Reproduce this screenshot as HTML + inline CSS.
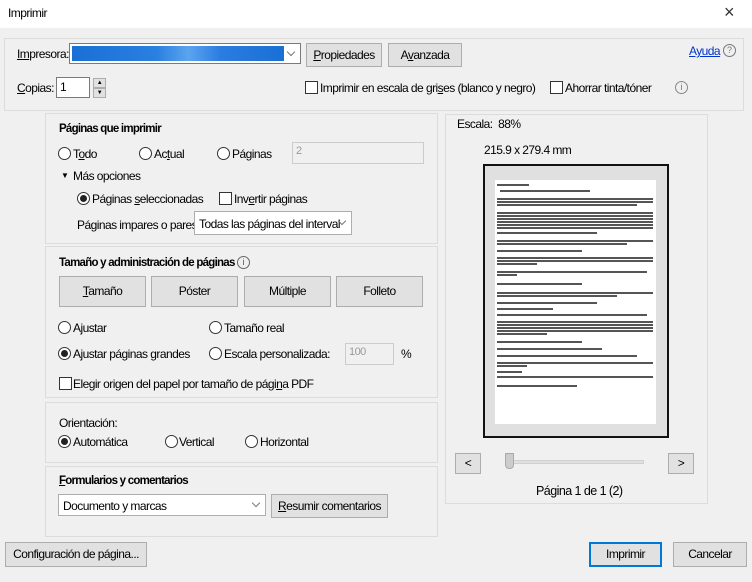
<!DOCTYPE html>
<html><head><meta charset="utf-8"><style>
*{box-sizing:border-box;margin:0;padding:0}
body{width:752px;height:582px;background:#f0f0f0;font-family:"Liberation Sans",sans-serif;font-size:12px;letter-spacing:-0.55px;color:#000;position:relative;overflow:hidden}
div,span{white-space:nowrap}
.a{position:absolute}
.box{position:absolute;border:1px solid #dcdcdc;background:#f0f0f0}
.btn{position:absolute;background:#e1e1e1;border:1px solid #adadad;text-align:center}
.rad{position:absolute;width:13px;height:13px;border:1px solid #333;border-radius:50%;background:#fff}
.rad.on::after{content:"";position:absolute;left:2px;top:2px;width:7px;height:7px;border-radius:50%;background:#222}
.chk{position:absolute;width:13px;height:13px;border:1px solid #333;background:#fff}
.inp{position:absolute;background:#fff;border:1px solid #7a7a7a}
.dis{position:absolute;background:#f0f0f0;border:1px solid #ccc;color:#999;font-size:11px;padding:2px 3px}
.sel{position:absolute;background:#fff;border:1px solid #adadad;overflow:hidden}
.arr{position:absolute;right:6px;top:50%;margin-top:-5px;width:6px;height:6px;border-right:1px solid #777;border-bottom:1px solid #777;transform:rotate(45deg)}
.b{font-weight:bold;font-size:11.5px;letter-spacing:-0.75px}
.l{position:absolute;height:1.5px;background:#555}
u{text-decoration:underline}
</style></head><body>
<div class="a" style="left:0;top:0;width:752px;height:28px;background:#fff"></div>
<div class="a" style="left:8px;top:6px;font-size:12px">Imprimir</div>
<div class="a" style="left:724px;top:2px;font-size:18px;color:#333">×</div>

<div class="box" style="left:4px;top:38px;width:740px;height:73px"></div>
<div class="a" style="left:17px;top:47px"><u>Im</u>presora:</div>
<div class="sel" style="left:69px;top:43px;width:232px;height:21px;border-color:#7a7a7a"><div style="position:absolute;left:2px;top:2px;width:212px;height:15px;background:linear-gradient(90deg,#1a6fd6,#2a80e0 40%,#5ba4ef 55%,#2a7de0 70%,#1a6fd6)"></div><div class="arr"></div></div>
<div class="btn" style="left:306px;top:43px;width:76px;height:24px;line-height:22px"><u>P</u>ropiedades</div>
<div class="btn" style="left:388px;top:43px;width:74px;height:24px;line-height:22px">A<u>v</u>anzada</div>
<div class="a" style="left:689px;top:44px;color:#0033cc;text-decoration:underline">Ayuda</div>
<div class="a" style="left:723px;top:44px;width:13px;height:13px;border:1px solid #777;border-radius:50%;font-size:9px;text-align:center;line-height:11px;color:#777;letter-spacing:0">?</div>
<div class="a" style="left:17px;top:81px"><u>C</u>opias:</div>
<div class="inp" style="left:56px;top:77px;width:34px;height:21px;font-size:12px;padding:2px 3px">1</div>
<div class="btn" style="left:93px;top:78px;width:13px;height:10px;font-size:6px;line-height:8px">▲</div>
<div class="btn" style="left:93px;top:88px;width:13px;height:10px;font-size:6px;line-height:8px">▼</div>
<div class="chk" style="left:305px;top:81px"></div>
<div class="a" style="left:320px;top:81px">Imprimir en escala de gri<u>s</u>es (blanco y negro)</div>
<div class="chk" style="left:550px;top:81px"></div>
<div class="a" style="left:565px;top:81px">Ahorrar tinta/tóner</div>
<div class="a" style="left:675px;top:81px;width:13px;height:13px;border:1px solid #888;border-radius:50%;font-size:9px;text-align:center;line-height:11px;color:#777;letter-spacing:0">i</div>

<div class="box" style="left:45px;top:113px;width:393px;height:131px"></div>
<div class="a b" style="left:59px;top:123px">Páginas que imprimir</div>
<div class="rad" style="left:58px;top:147px"></div><div class="a" style="left:73px;top:147px">T<u>o</u>do</div>
<div class="rad" style="left:139px;top:147px"></div><div class="a" style="left:154px;top:147px">Ac<u>t</u>ual</div>
<div class="rad" style="left:217px;top:147px"></div><div class="a" style="left:232px;top:147px">Pá<u>g</u>inas</div>
<div class="dis" style="left:292px;top:142px;width:132px;height:22px">2</div>
<div class="a" style="left:61px;top:171px;font-size:8px">▼</div><div class="a" style="left:73px;top:169px">Más opciones</div>
<div class="rad on" style="left:77px;top:192px"></div><div class="a" style="left:92px;top:192px">Páginas <u>s</u>eleccionadas</div>
<div class="chk" style="left:219px;top:192px"></div><div class="a" style="left:234px;top:192px">Inv<u>e</u>rtir páginas</div>
<div class="a" style="left:77px;top:218px">Páginas impares o pares</div>
<div class="sel" style="left:194px;top:211px;width:158px;height:24px"><span style="position:absolute;left:4px;top:5px">Todas las páginas del interval</span><div class="arr"></div></div>

<div class="box" style="left:45px;top:246px;width:393px;height:152px"></div>
<div class="a b" style="left:59px;top:257px">Tamaño y administración de páginas</div>
<div class="a" style="left:237px;top:256px;width:13px;height:13px;border:1px solid #666;border-radius:50%;font-size:9px;text-align:center;line-height:11px;color:#555;letter-spacing:0">i</div>
<div class="btn" style="left:59px;top:276px;width:87px;height:31px;line-height:29px"><u>T</u>amaño</div>
<div class="btn" style="left:151px;top:276px;width:87px;height:31px;line-height:29px">Póster</div>
<div class="btn" style="left:244px;top:276px;width:87px;height:31px;line-height:29px">Múltiple</div>
<div class="btn" style="left:336px;top:276px;width:87px;height:31px;line-height:29px">Folleto</div>
<div class="rad" style="left:58px;top:321px"></div><div class="a" style="left:73px;top:321px">Ajustar</div>
<div class="rad" style="left:209px;top:321px"></div><div class="a" style="left:224px;top:321px">Tamaño real</div>
<div class="rad on" style="left:58px;top:347px"></div><div class="a" style="left:73px;top:347px">Ajustar páginas grandes</div>
<div class="rad" style="left:209px;top:347px"></div><div class="a" style="left:224px;top:347px">Escala personalizada:</div>
<div class="dis" style="left:345px;top:343px;width:49px;height:22px">100</div>
<div class="a" style="left:401px;top:347px">%</div>
<div class="chk" style="left:59px;top:377px"></div><div class="a" style="left:73px;top:377px">Elegir origen del papel por tamaño de pági<u>n</u>a PDF</div>

<div class="box" style="left:45px;top:402px;width:393px;height:61px"></div>
<div class="a" style="left:59px;top:416px">Orientación:</div>
<div class="rad on" style="left:58px;top:435px"></div><div class="a" style="left:73px;top:435px">Automática</div>
<div class="rad" style="left:165px;top:435px"></div><div class="a" style="left:179px;top:435px">Vertical</div>
<div class="rad" style="left:245px;top:435px"></div><div class="a" style="left:260px;top:435px">Horizontal</div>

<div class="box" style="left:45px;top:466px;width:393px;height:71px"></div>
<div class="a b" style="left:59px;top:475px"><u>F</u>ormularios y comentarios</div>
<div class="sel" style="left:58px;top:494px;width:208px;height:22px"><span style="position:absolute;left:4px;top:4px">Documento y marcas</span><div class="arr"></div></div>
<div class="btn" style="left:271px;top:494px;width:117px;height:24px;line-height:22px"><u>R</u>esumir comentarios</div>

<div class="btn" style="left:5px;top:542px;width:142px;height:25px;line-height:23px">Configuración de página...</div>

<div class="box" style="left:445px;top:114px;width:263px;height:390px"></div>
<div class="a" style="left:457px;top:117px">Escala:&nbsp; 88%</div>
<div class="a" style="left:484px;top:143px">215.9 x 279.4 mm</div>
<div class="a" style="left:483px;top:164px;width:186px;height:274px;border:2px solid #111;background:#e0e0e0"></div>
<div class="a" style="left:495px;top:180px;width:161px;height:244px;background:#fff"></div>
<div class="l" style="left:497px;top:184px;width:32px"></div>
<div class="l" style="left:500px;top:190px;width:90px"></div>
<div class="l" style="left:497px;top:198px;width:156px"></div><div class="l" style="left:497px;top:201px;width:156px"></div><div class="l" style="left:497px;top:204px;width:140px"></div>
<div class="l" style="left:497px;top:212px;width:156px"></div><div class="l" style="left:497px;top:215px;width:156px"></div><div class="l" style="left:497px;top:218px;width:156px"></div><div class="l" style="left:497px;top:221px;width:156px"></div><div class="l" style="left:497px;top:224px;width:156px"></div><div class="l" style="left:497px;top:227px;width:156px"></div><div class="l" style="left:497px;top:232px;width:100px"></div>
<div class="l" style="left:497px;top:240px;width:156px"></div><div class="l" style="left:497px;top:243px;width:130px"></div>
<div class="l" style="left:497px;top:250px;width:85px"></div>
<div class="l" style="left:497px;top:257px;width:156px"></div><div class="l" style="left:497px;top:260px;width:156px"></div><div class="l" style="left:497px;top:263px;width:40px"></div>
<div class="l" style="left:497px;top:271px;width:150px"></div><div class="l" style="left:497px;top:274px;width:20px"></div>
<div class="l" style="left:497px;top:283px;width:85px"></div>
<div class="l" style="left:497px;top:292px;width:156px"></div><div class="l" style="left:497px;top:295px;width:120px"></div>
<div class="l" style="left:497px;top:302px;width:100px"></div>
<div class="l" style="left:497px;top:308px;width:56px"></div>
<div class="l" style="left:497px;top:314px;width:150px"></div>
<div class="l" style="left:497px;top:321px;width:156px"></div><div class="l" style="left:497px;top:324px;width:156px"></div><div class="l" style="left:497px;top:327px;width:156px"></div><div class="l" style="left:497px;top:330px;width:156px"></div><div class="l" style="left:497px;top:333px;width:50px"></div>
<div class="l" style="left:497px;top:341px;width:85px"></div>
<div class="l" style="left:497px;top:348px;width:105px"></div>
<div class="l" style="left:497px;top:355px;width:140px"></div>
<div class="l" style="left:497px;top:362px;width:156px"></div><div class="l" style="left:497px;top:365px;width:30px"></div>
<div class="l" style="left:497px;top:371px;width:25px"></div>
<div class="l" style="left:497px;top:376px;width:156px"></div>
<div class="l" style="left:497px;top:385px;width:80px"></div>
<div class="btn" style="left:455px;top:453px;width:26px;height:21px;line-height:19px">&lt;</div>
<div class="btn" style="left:668px;top:453px;width:26px;height:21px;line-height:19px">&gt;</div>
<div class="a" style="left:507px;top:460px;width:137px;height:4px;background:#e0e0e0;border:1px solid #d0d0d0"></div>
<div class="a" style="left:505px;top:453px;width:9px;height:16px;background:#ccc;border:1px solid #aaa;border-radius:0 0 4px 4px"></div>
<div class="a" style="left:536px;top:484px;font-size:12.5px">Página 1 de 1 (2)</div>

<div class="btn" style="left:589px;top:542px;width:73px;height:25px;line-height:21px;border:2px solid #0078d7">Imprimir</div>
<div class="btn" style="left:673px;top:542px;width:74px;height:25px;line-height:23px">Cancelar</div>
</body></html>
